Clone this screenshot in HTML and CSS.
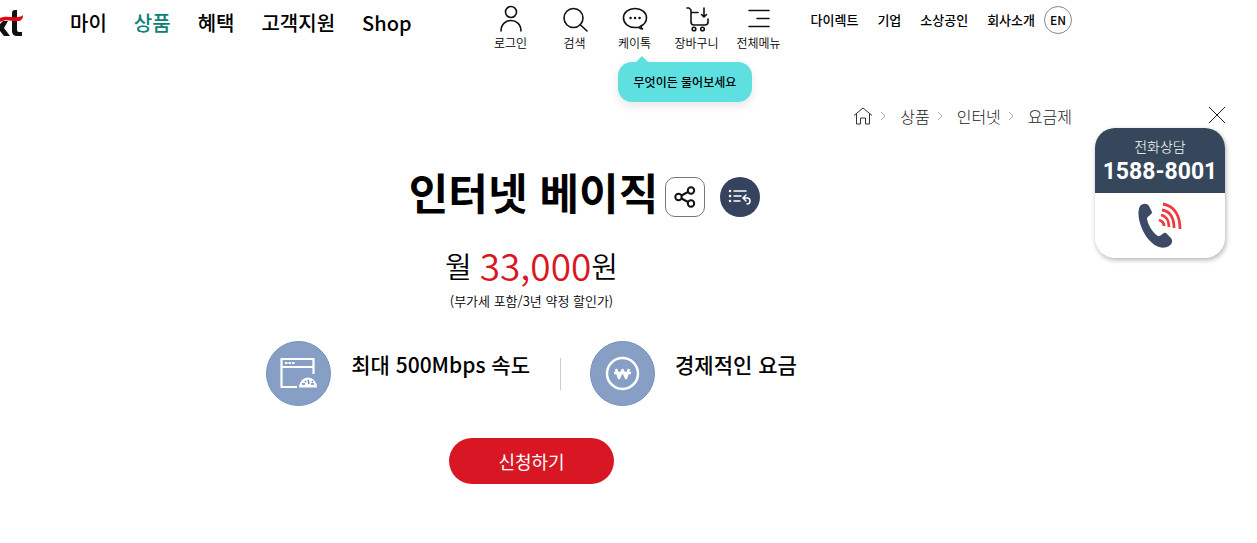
FILE: index.html
```html
<!DOCTYPE html>
<html lang="ko">
<head>
    <meta charset="UTF-8">
    <meta name="viewport" content="width=device-width, initial-scale=1">
    <title>인터넷 베이직</title>
    <link rel="stylesheet" href="styles.css">
</head>
<body>
    <header class="header">
        <a href="#" class="logo" aria-label="kt">
            <svg width="24" height="32" viewBox="0 0 24 32">
                <path d="M12 8q0-3 3-3h2v20q0 2 2 2h3v4h-5q-5 0-5-5z" fill="#111"/>
                <path d="M0 19l3-3h5l-4 7 6 8H4l-4-5z" fill="#111"/>
                <path d="M0 13c6-3 12 0 18-1 2 0 4-1 5-2 0 4-2 6-5 6-6 1-11-3-18 1z" fill="#e30613"/>
            </svg>
        </a>
        <nav class="gnb">
            <a href="#">마이</a>
            <a href="#" class="on">상품</a>
            <a href="#">혜택</a>
            <a href="#">고객지원</a>
            <a href="#">Shop</a>
        </nav>
        <div class="tools">
            <a href="#" class="tool">
                <svg class="icon" width="30" height="30" viewBox="0 0 30 30">
                    <circle cx="15" cy="9" r="5.500"/>
                    <path d="M5 28C5 14 25 14 25 28"/>
                </svg>
                로그인
            </a>
            <a href="#" class="tool">
                <svg class="icon" width="30" height="30" viewBox="0 0 30 30">
                    <circle cx="13.500" cy="15" r="9.500"/>
                    <path d="M20 21.500l7 6.500"/>
                </svg>
                검색
            </a>
            <div class="talk">
                <a href="#" class="tool">
                    <svg class="icon" width="30" height="30" viewBox="0 0 30 30">
                        <path d="M20 23.500c3.500-1.500 6.500-4.500 6.500-8.500 0-5.500-5-9.500-11.500-9.500S3.500 9.500 3.500 15 8.500 24.500 15 24.500c1.500 0 2.500 0 3.500-.3 1 1 2.500 1.800 4 1.800-1-.5-1.500-1.500-1.500-3"/>
                        <path class="dots" d="M10.500 15h.1M15 15h.1M19.500 15h.1"/>
                    </svg>
                    케이톡
                </a>
                <span class="tooltip">무엇이든 물어보세요</span>
            </div>
            <a href="#" class="tool">
                <svg class="icon" width="30" height="30" viewBox="0 0 30 30">
                    <path d="M5 5h2l2 2v12q0 3 3 3h11q3 0 3-3v-3M9 9.500h7M22 5v9M19.500 11.500L22 14l2.500-2.500"/>
                    <circle cx="12" cy="26" r="1.800"/>
                    <circle cx="20.500" cy="26" r="1.800"/>
                </svg>
                장바구니
            </a>
            <a href="#" class="tool">
                <svg class="icon" width="30" height="30" viewBox="0 0 30 30">
                    <path d="M5 7.500h20M13 15.500h12M5 23.500h20"/>
                </svg>
                전체메뉴
            </a>
        </div>
        <div class="util">
            <a href="#">다이렉트</a>
            <a href="#">기업</a>
            <a href="#">소상공인</a>
            <a href="#">회사소개</a>
            <a href="#" class="lang">EN</a>
        </div>
    </header>

    <nav class="breadcrumb">
        <a href="#" aria-label="홈">
            <svg class="home" width="20" height="18" viewBox="0 0 20 18">
                <path d="M1 8.500L10 1l9 7.500M3.500 7v10h4v-6h5v6h4V7"/>
            </svg>
        </a>
        <svg class="arrow" width="6" height="10" viewBox="0 0 6 10"><path d="M1 1l4 4-4 4"/></svg>
        <a href="#">상품</a>
        <svg class="arrow" width="6" height="10" viewBox="0 0 6 10"><path d="M1 1l4 4-4 4"/></svg>
        <a href="#">인터넷</a>
        <svg class="arrow" width="6" height="10" viewBox="0 0 6 10"><path d="M1 1l4 4-4 4"/></svg>
        <a href="#">요금제</a>
    </nav>

    <main class="product">
        <div class="title">
            <h1>인터넷 베이직</h1>
            <button type="button" class="share" aria-label="공유하기">
                <svg width="22" height="22" viewBox="0 0 22 22">
                    <path d="M7.500 9.500L14 6M7.500 12.500L14 16"/>
                    <circle cx="4.500" cy="11" r="3.200"/>
                    <circle cx="17" cy="4.500" r="3.200"/>
                    <circle cx="17" cy="17.500" r="3.200"/>
                </svg>
            </button>
            <button type="button" class="list" aria-label="목록으로">
                <svg width="24" height="18" viewBox="0 0 24 18">
                    <path d="M6 3h12M6 8h7M6 13h6"/>
                    <path class="dots" d="M2 3h.1M2 8h.1M2 13h.1"/>
                    <path d="M18 7l-3 3 3 3M15 10h4c4 0 4 6 0 6"/>
                </svg>
            </button>
        </div>
        <p class="price"><span>월</span><span class="won"><strong>33,000</strong>원</span></p>
        <p class="note">(부가세 포함/3년 약정 할인가)</p>
        <ul class="features">
            <li>
                <svg class="badge" width="65" height="65" viewBox="0 0 65 65">
                    <circle cx="32.500" cy="32.500" r="32" fill="#879fc5" stroke="#7190be"/>
                    <path d="M31 46H15.500V18h32v15M15.500 26h32" fill="none" stroke="#fff" stroke-width="2.200" stroke-linejoin="round"/>
                    <path d="M19 22h2.500M22.500 22H25M26 22h2.500" stroke="#fff" stroke-width="2"/>
                    <path d="M33 46.500a9 10 0 0 1 18 0z" fill="#fff"/>
                    <path d="M36 43h3m6 0h3m-9-3l1 1m7-1l-1 1m-4-2l1 4" fill="none" stroke="#6c88b4" stroke-width="1.500"/>
                </svg>
                <span>최대 500Mbps 속도</span>
            </li>
            <li>
                <svg class="badge" width="65" height="65" viewBox="0 0 65 65">
                    <circle cx="32.500" cy="32.500" r="32" fill="#879fc5" stroke="#7190be"/>
                    <circle cx="32.500" cy="32.500" r="15.500" fill="none" stroke="#fff" stroke-width="2.500"/>
                    <path d="M26 28l3 9 3.500-8 3.500 8 3-9M24 32h17" fill="none" stroke="#fff" stroke-width="2.500" stroke-linejoin="round"/>
                </svg>
                <span>경제적인 요금</span>
            </li>
        </ul>
        <button type="button" class="apply">신청하기</button>
    </main>

    <aside class="call">
        <button type="button" class="close" aria-label="닫기">
            <svg width="16" height="16" viewBox="0 0 16 16"><path d="M0 0l16 16M16 0L0 16"/></svg>
        </button>
        <a href="tel:1588-8001" class="call_box">
            <span class="call_top">
                <span class="call_label">전화상담</span>
                <b>1588-8001</b>
            </span>
            <svg width="46" height="48" viewBox="0 0 46 48">
                <path d="M3 4c3-3 7-3 9 0l3 6c0 3-5 4-5 7 1 6 6 14 11 17 3 1 5-4 8-3l5 5c2 3 1 6-2 8-5 3-12 2-18-4C6 33-2 14 3 4z" fill="#3c4a66"/>
                <path d="M26 2c11 2 17 11 17 25M25 8c8 1 12 8 12 18M24 13c5 1 8 6 8 12M22 18c3 1 5 3 5 6" fill="none" stroke="#ee3a40" stroke-width="2.800"/>
            </svg>
        </a>
    </aside>
</body>
</html>
```
FILE: styles.css
```css
*{box-sizing:border-box;}
body{margin:0;background:#fff;color:#000;font-family:"Noto Sans CJK KR","Noto Sans",sans-serif;}
a{color:inherit;text-decoration:none;}
button{padding:0;border:0;background:none;font-family:inherit;cursor:pointer;}
h1,p,ul{margin:0;padding:0;}
svg{display:block;flex:none;}

/* header */
.header{display:flex;align-items:flex-start;height:62px;padding-right:185px;white-space:nowrap;}
.logo{width:70px;padding-top:5px;}
.gnb{display:flex;gap:27px;padding-top:8px;font-size:20px;font-weight:500;line-height:30px;}
.gnb .on{color:#0b8178;}
.tools{display:grid;grid-template-columns:66px 62px 58px 66px 58px;margin-left:auto;margin-right:23px;}
.tool{display:flex;flex-direction:column;align-items:center;padding-top:3px;font-size:12px;font-weight:350;line-height:18px;}
.icon{margin-bottom:1px;fill:none;stroke:#111;stroke-width:1.6;stroke-linecap:round;stroke-linejoin:round;}
.icon .dots{stroke-width:2.4;}
.talk{position:relative;}
.tooltip{position:absolute;top:62px;left:12px;padding:0 16px;border-radius:14px;background:#5fe0e0;box-shadow:0 4px 10px rgba(0,0,0,.1);font-size:12px;font-weight:500;line-height:40px;}
.tooltip::before{content:"";position:absolute;top:-6px;left:18px;border:solid transparent;border-width:0 6px 6px;border-bottom-color:#5fe0e0;}
.util{display:flex;gap:19px;padding-top:6px;font-size:13px;font-weight:500;line-height:28px;}
.util .lang{width:28px;height:28px;margin-left:-10px;border:1px solid #888;border-radius:50%;font-size:12px;line-height:26px;text-align:center;}

/* breadcrumb */
.breadcrumb{display:flex;justify-content:flex-end;align-items:center;padding:42px 185px 0 0;font-size:16px;font-weight:300;line-height:24px;color:#222;}
.home{fill:none;stroke:#333;}
.arrow{margin:0 14px 0 7px;fill:none;stroke:#aaa;}

/* product */
.product{display:flex;flex-direction:column;align-items:center;padding:33px 194px 40px 0;}
.title{display:flex;align-items:center;padding-left:106px;}
.title h1{font-size:43px;font-weight:700;line-height:60px;}
.share,.list{display:flex;align-items:center;justify-content:center;width:40px;height:40px;margin-top:12px;}
.share{margin-left:7px;border:1px solid #777;border-radius:10px;}
.share svg{fill:none;stroke:#111;stroke-width:2;}
.list{margin-left:15px;border-radius:50%;background:#35435f;}
.list svg{fill:none;stroke:#fff;stroke-width:1.5;stroke-linecap:round;}
.list .dots{stroke-width:2.4;}
.price,.won{display:flex;align-items:center;}
.price{gap:8px;margin-top:17px;font-size:29px;font-weight:350;line-height:54px;}
.price strong{font-size:37px;font-weight:350;color:#d91724;}
.note{font-size:13px;font-weight:350;line-height:18px;}
.features{display:flex;margin-top:31px;list-style:none;font-size:21px;font-weight:500;line-height:46px;}
.features li{display:flex;gap:20px;}
.features li + li{margin-left:30px;}
.features li + li::before{content:"";width:1px;height:32px;margin:17px 9px 0 0;background:#ccc;}
.apply{width:165px;height:46px;margin-top:32px;border-radius:23px;background:#d91724;color:#fff;font-size:18px;line-height:44px;}

/* phone banner over the page */
.call{position:absolute;top:107px;right:32px;display:flex;flex-direction:column;align-items:flex-end;gap:5px;}
.close svg{fill:none;stroke:#222;}
.call_box{display:flex;flex-direction:column;align-items:center;width:130px;height:130px;overflow:hidden;border-radius:20px;background:#fff;box-shadow:1px 2px 5px rgba(0,0,0,.3);}
.call_top{display:flex;flex-direction:column;align-items:center;width:100%;height:65px;margin-bottom:9px;padding-top:8px;background:#36475b;color:#fff;}
.call_label{font-size:14px;font-weight:300;line-height:20px;}
.call_top b{font-family:Roboto,sans-serif;font-size:23px;font-weight:700;line-height:32px;}
```
